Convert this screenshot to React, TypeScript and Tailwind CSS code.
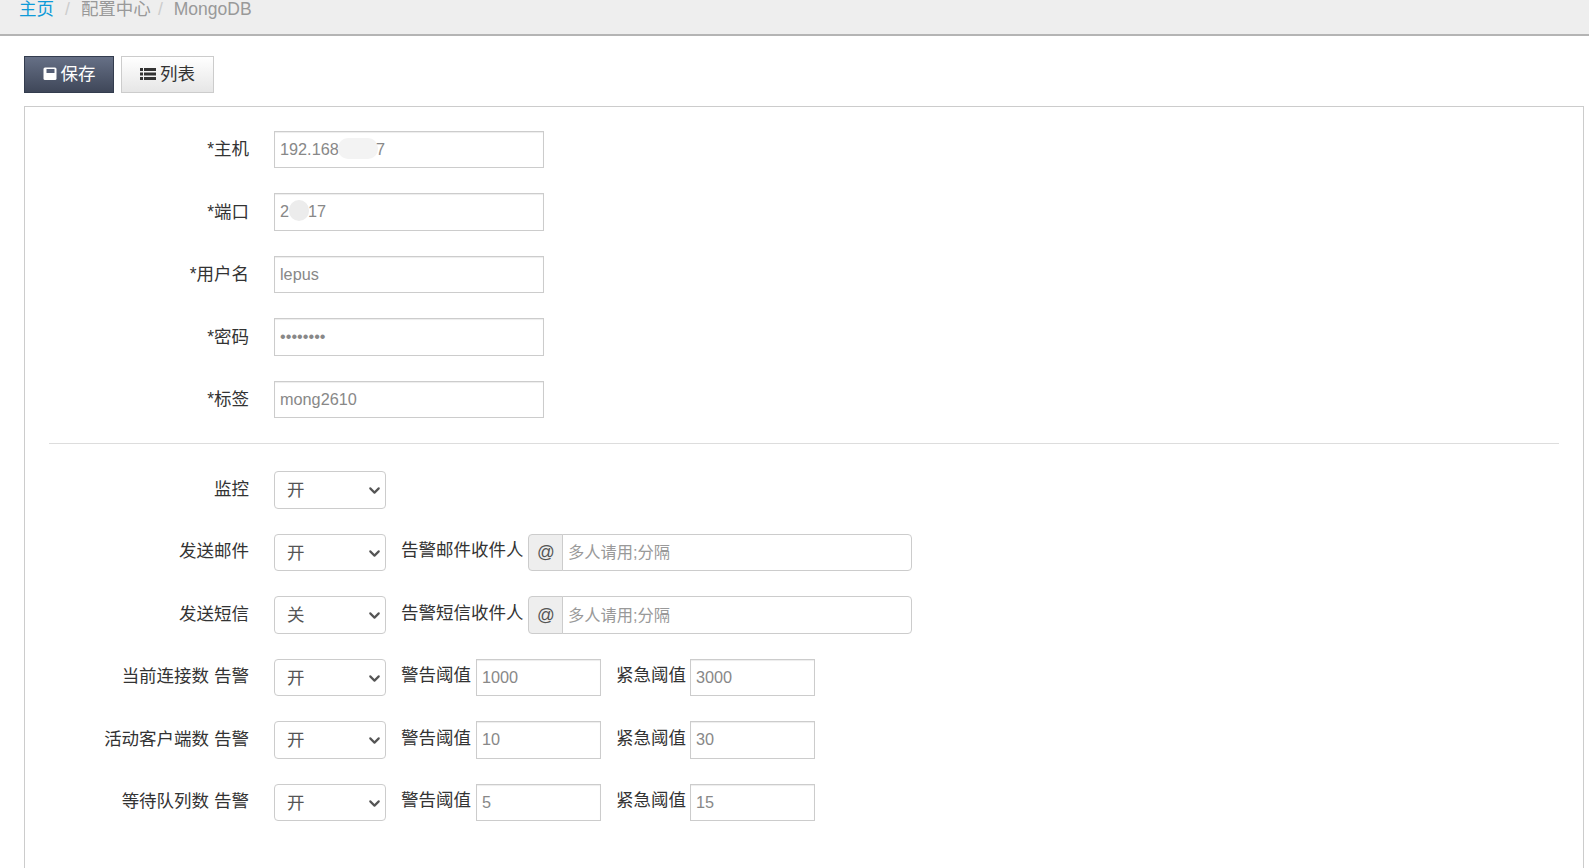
import React from "react";
import { ChevronDown } from "lucide-react";

const font = "font-['Liberation_Sans','Noto_Sans_CJK_SC',sans-serif]";
const inputCls =
  "h-full border border-[#cccccc] bg-white px-[5px] text-[16.25px] text-[#888888] outline-none shadow-[inset_0_1px_1px_rgba(0,0,0,0.075)]";

const Label = ({ children }: { children: React.ReactNode }) => (
  <label className="w-[224px] shrink-0 -translate-y-px text-right text-[17.5px] leading-[24px] text-[#333333]">
    {children}
  </label>
);

const TextRow = ({
  label,
  value,
  type = "text",
  children,
}: {
  label: string;
  value: string;
  type?: string;
  children?: React.ReactNode;
}) => (
  <div className="mb-[25px] flex h-[37.5px] items-center">
    <label className="w-[224px] shrink-0 text-right text-[17.5px] leading-[24px] text-[#333333]">
      {label}
    </label>
    <div className="relative ml-[25px] h-full w-[270px]">
      <input type={type} readOnly value={value} className={`${inputCls} w-full`} />
      {children}
    </div>
  </div>
);

const Select = ({ value }: { value: string }) => (
  <div className="relative ml-[25px] h-[37.5px] w-[112px] shrink-0 rounded-[4px] border border-[#cccccc] bg-white">
    <span className="block pl-[12px] text-[17.5px] leading-[36px] text-[#555555]">{value}</span>
    <ChevronDown
      size={17}
      strokeWidth={3}
      className="absolute right-[2px] top-[10px] text-[#555555]"
    />
  </div>
);

const Recipient = ({ label }: { label: string }) => (
  <>
    <span className="ml-[15px] w-[124px] shrink-0 -translate-y-[2px] text-[17.5px] leading-[24px] text-[#333333]">
      {label}
    </span>
    <div className="ml-[3px] flex h-[37.5px] w-[384px]">
      <span className="flex w-[35px] shrink-0 items-center justify-center rounded-l-[4px] border border-[#cccccc] bg-[#eeeeee] pl-px text-[17.5px] text-[#555555]">
        @
      </span>
      <input
        readOnly
        placeholder="多人请用;分隔"
        className="-ml-px min-w-0 flex-1 rounded-r-[4px] border border-[#cccccc] bg-white px-[5px] text-[16.25px] outline-none placeholder:text-[#999999]"
      />
    </div>
  </>
);

const Threshold = ({ warn, crit }: { warn: string; crit: string }) => (
  <>
    <span className="ml-[15px] w-[71px] shrink-0 -translate-y-[2px] text-[17.5px] leading-[24px] text-[#333333]">
      警告阈值
    </span>
    <div className="ml-[4px] h-[37.5px] w-[125px] shrink-0">
      <input readOnly value={warn} className={`${inputCls} w-full`} />
    </div>
    <span className="ml-[15px] w-[71px] shrink-0 -translate-y-[2px] text-[17.5px] leading-[24px] text-[#333333]">
      紧急阈值
    </span>
    <div className="ml-[3px] h-[37.5px] w-[125px] shrink-0">
      <input readOnly value={crit} className={`${inputCls} w-full`} />
    </div>
  </>
);

const Row = ({ label, children }: { label: string; children: React.ReactNode }) => (
  <div className="mb-[25px] flex h-[37.5px] items-center">
    <Label>{label}</Label>
    {children}
  </div>
);

export default function App() {
  return (
    <div className={`${font} h-[868px] overflow-hidden bg-white`}>
      <div className="h-[36px] border-b-2 border-[#b4b4b4] bg-[#eeeeee] pl-[19px]">
        <div className="flex -translate-y-px text-[17.5px] leading-[20px] text-[#999999]">
          <a href="#" className="text-[#0e9ad8]">主页</a>
          <span className="ml-[11px] text-[#cccccc]">/</span>
          <span className="ml-[11px]">配置中心</span>
          <span className="ml-[7px] text-[#cccccc]">/</span>
          <span className="ml-[11px]">MongoDB</span>
        </div>
      </div>

      <div className="ml-[24px] mr-[5px] mt-[20px]">
        <div className="flex gap-[7px]">
          <button className="flex h-[37px] w-[90px] items-center justify-center gap-[4px] border border-[#333c4e] bg-gradient-to-b from-[#667086] to-[#3f4759] pb-px text-[17.5px] text-white">
            <svg width="14" height="14" viewBox="0 0 14 14">
              <rect x="0.5" y="0.5" width="13" height="12.5" rx="1.5" fill="#ffffff" />
              <rect x="3.5" y="2" width="8" height="4" fill="#566077" />
            </svg>
            保存
          </button>
          <button className="flex h-[37px] w-[93px] items-center justify-center gap-[4px] border border-[#cccccc] bg-gradient-to-b from-white to-[#e6e6e6] pb-px text-[17.5px] text-[#333333]">
            <svg width="16" height="14" viewBox="0 0 16 14" fill="#333333">
              <rect x="0" y="1" width="3" height="3" />
              <rect x="4" y="1" width="12" height="3" />
              <rect x="0" y="5.5" width="3" height="3" />
              <rect x="4" y="5.5" width="12" height="3" />
              <rect x="0" y="10" width="3" height="3" />
              <rect x="4" y="10" width="12" height="3" />
            </svg>
            列表
          </button>
        </div>

        <div className="mt-[13px] h-[800px] border border-[#cccccc] pt-[23.5px]">
          <TextRow label="*主机" value="192.168">
            <span className="absolute left-[64px] top-[7px] h-[21px] w-[40px] rounded-[10px] bg-[#f3f3f3]" />
            <span className="absolute left-[102px] top-[8px] text-[16.25px] leading-[21px] text-[#888888]">7</span>
          </TextRow>
          <TextRow label="*端口" value="2">
            <span className="absolute left-[15px] top-[7px] h-[21px] w-[20px] rounded-full bg-[#ececec]" />
            <span className="absolute left-[34px] top-[8px] text-[16.25px] leading-[21px] text-[#888888]">17</span>
          </TextRow>
          <TextRow label="*用户名" value="lepus" />
          <TextRow label="*密码" value="lepus123" type="password" />
          <TextRow label="*标签" value="mong2610" />

          <div className="mx-[24px] mb-[27px] h-px bg-[#dddddd]" />

          <Row label="监控">
            <Select value="开" />
          </Row>
          <Row label="发送邮件">
            <Select value="开" />
            <Recipient label="告警邮件收件人" />
          </Row>
          <Row label="发送短信">
            <Select value="关" />
            <Recipient label="告警短信收件人" />
          </Row>
          <Row label="当前连接数 告警">
            <Select value="开" />
            <Threshold warn="1000" crit="3000" />
          </Row>
          <Row label="活动客户端数 告警">
            <Select value="开" />
            <Threshold warn="10" crit="30" />
          </Row>
          <Row label="等待队列数 告警">
            <Select value="开" />
            <Threshold warn="5" crit="15" />
          </Row>
        </div>
      </div>
    </div>
  );
}
